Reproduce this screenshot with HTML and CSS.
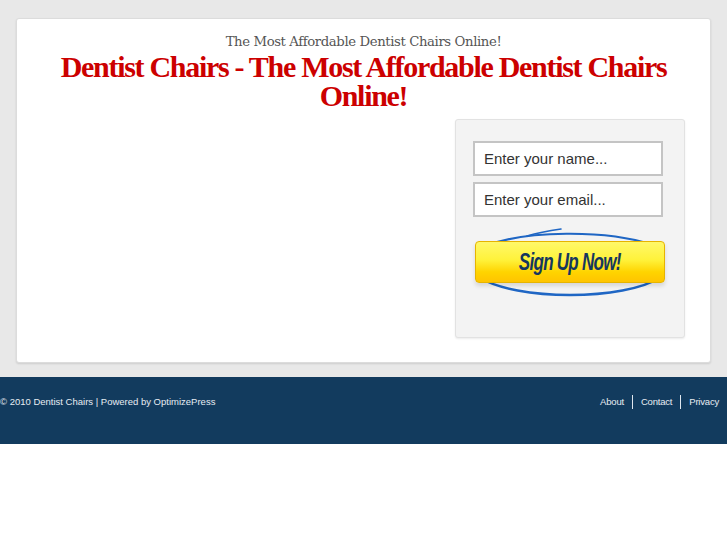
FILE: index.html
```html
<!DOCTYPE html>
<html>
<head>
<meta charset="utf-8">
<link rel="stylesheet" href="styles.css">
</head>
<body>
<div class="page">
  <div class="card">
    <p class="subhead">The Most Affordable Dentist Chairs Online!</p>
    <h1 class="headline">Dentist Chairs - The Most Affordable Dentist Chairs Online!</h1>
    <div class="row">
      <div class="main"></div>
      <div class="optin">
        <div class="field">Enter your name...</div>
        <div class="field">Enter your email...</div>
        <div class="signup">
          <svg class="swoosh" width="190" height="72" viewBox="0 0 190 72">
            <path d="M14 18 C 50 4, 130 2, 178 18" fill="none" stroke="#1f66c4" stroke-width="2.2" stroke-linecap="round"/>
            <path d="M52 9 C 62 6, 72 4, 86 2" fill="none" stroke="#1f66c4" stroke-width="1.6" stroke-linecap="round"/>
            <path d="M4 50 C 40 74, 150 74, 186 50" fill="none" stroke="#1f66c4" stroke-width="2.4" stroke-linecap="round"/>
          </svg>
          <div class="button"><span class="btext">Sign Up Now!</span></div>
        </div>
      </div>
    </div>
  </div>
</div>
<footer class="footer">
  <div class="copy">© 2010 Dentist Chairs | Powered by OptimizePress</div>
  <nav class="links">
    <a>About</a><a>Contact</a><a>Privacy</a>
  </nav>
</footer>
</body>
</html>
```
FILE: styles.css
```css
html, body { margin: 0; padding: 0; background: #fff; }
.page {
  background: #e8e8e8;
  padding: 18px 16px 14px 16px;
}
.card {
  background: #fff;
  border: 1px solid #dcdcdc;
  border-radius: 3px;
  box-shadow: 0 1px 2px rgba(0,0,0,0.12);
  height: 343px;
  box-sizing: content-box;
  width: 693px;
}
.subhead {
  margin: 13px 0 0 0;
  text-align: center;
  font-family: "DejaVu Serif", Georgia, serif;
  font-size: 13.5px;
  letter-spacing: -0.4px;
  color: #555;
  line-height: 18px;
  transform: scaleX(0.98);
}
.headline {
  margin: 2px 30px 0 30px;
  text-align: center;
  font-family: "Liberation Serif", "Times New Roman", serif;
  font-weight: bold;
  font-size: 30px;
  letter-spacing: -1.3px;
  line-height: 29px;
  color: #cc0000;
}
.row {
  display: flex;
  margin-top: 9px;
  padding-right: 25px;
}
.main { flex: 1; }
.optin {
  width: 230px;
  height: 219px;
  background: #f3f3f3;
  border: 1px solid #e2e2e2;
  border-radius: 3px;
  box-shadow: 0 1px 2px rgba(0,0,0,0.08);
  padding: 21px 0 0 17px;
  box-sizing: border-box;
}
.field {
  width: 190px;
  height: 35px;
  box-sizing: border-box;
  border: 2px solid #c4c4c4;
  background: #fff;
  font-family: "Liberation Sans", Arial, sans-serif;
  font-size: 15px;
  color: #333;
  line-height: 31px;
  padding-left: 9px;
  margin-bottom: 6px;
}
.signup {
  position: relative;
  width: 192px;
  height: 72px;
  margin-top: 10px;
  margin-left: 2px;
}
.swoosh { position: absolute; left: 0; top: 0; }
.button {
  position: absolute;
  left: 0;
  top: 14px;
  width: 190px;
  height: 42px;
  box-sizing: border-box;
  border: 1px solid #e6b400;
  border-radius: 4px;
  background: linear-gradient(#fff86a 0%, #fff23a 45%, #ffd400 75%, #ffc400 100%);
  box-shadow: 0 3px 4px rgba(0,0,0,0.12);
  display: flex;
  align-items: center;
  justify-content: center;
}
.btext {
  font-family: "Liberation Sans", Arial, sans-serif;
  font-weight: bold;
  font-style: italic;
  font-size: 23px;
  color: #15375e;
  letter-spacing: -1px;
  transform: scaleX(0.74);
  white-space: nowrap;
}
.footer {
  background: #123b5e;
  height: 67px;
  display: flex;
  justify-content: space-between;
  align-items: flex-start;
  padding-top: 18px;
  box-sizing: border-box;
  font-family: "Liberation Sans", Arial, sans-serif;
  font-size: 9.5px;
  color: #e6ecf2;
}
.copy { line-height: 14px; }
.links { display: flex; padding-right: 8px; letter-spacing: -0.2px; }
.links a {
  line-height: 14px;
  padding: 0 8px;
  border-left: 1px solid #dfe6ee;
}
.links a:first-child { border-left: none; }
.links a:last-child { padding-right: 0; }
```
